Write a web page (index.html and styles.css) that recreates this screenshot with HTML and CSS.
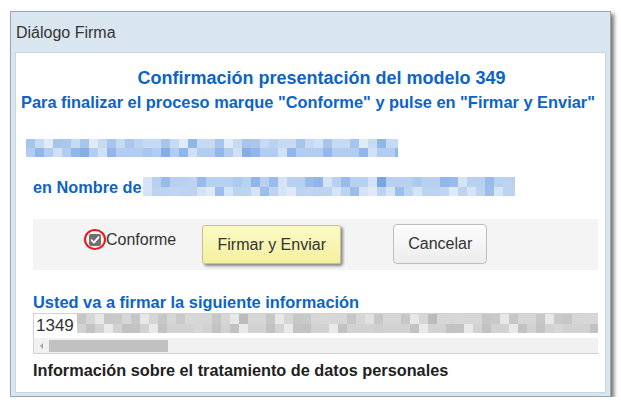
FILE: index.html
```html
<!DOCTYPE html>
<html lang="es">
<head>
<meta charset="utf-8">
<title>Diálogo Firma</title>
<link rel="stylesheet" href="styles.css">
</head>
<body>
<div class="dialog">
  <div class="dialog-title">Diálogo Firma</div>
  <div class="dialog-body">
    <div class="heading">Confirmación presentación del modelo 349</div>
    <div class="subheading">Para finalizar el proceso marque "Conforme" y pulse en "Firmar y Enviar"</div>
    <div class="blur blur-blue blur-first"><div class="b-row b-top"></div><div class="b-row b-bottom"></div></div>
    <div class="name-row">
      <span class="name-label">en Nombre de</span>
      <div class="blur blur-blue blur-name"><div class="b-row b-top alt"></div><div class="b-row b-bottom alt"></div></div>
    </div>
    <div class="action-row">
      <label class="agree">
        <span class="check-wrap">
          <span class="checkbox">
            <svg width="10" height="10" viewBox="0 0 10 10"><path d="M1.6 5.2 L4 7.6 L8.6 2.2" fill="none" stroke="#fff" stroke-width="1.8" stroke-linecap="round" stroke-linejoin="round"/></svg>
          </span>
          <span class="ring"></span>
        </span>
        <span class="agree-text">Conforme</span>
      </label>
      <button class="btn btn-sign">Firmar y Enviar</button>
      <button class="btn btn-cancel">Cancelar</button>
    </div>
    <div class="section-label">Usted va a firmar la siguiente información</div>
    <div class="info-box">
      <div class="info-line">
        <span class="info-code">1349</span>
        <div class="blur blur-gray"><div class="b-row b-top"></div><div class="b-row b-bottom"></div></div>
      </div>
      <div class="hscroll">
        <span class="arrow"></span>
        <span class="thumb"></span>
      </div>
    </div>
    <div class="privacy">Información sobre el tratamiento de datos personales</div>
  </div>
</div>
</body>
</html>
```

FILE: styles.css
```css
html, body {
  margin: 0;
  padding: 0;
  background: #ffffff;
}

body {
  font-family: "Liberation Sans", Arial, sans-serif;
  color: #333333;
}

.dialog {
  box-sizing: border-box;
  width: 601px;
  height: 386px;
  margin: 11px 0 0 10px;
  border: 1px solid #9ca6ae;
  background: #d9e6f0;
  box-shadow: 3px 3px 4px rgba(0, 0, 0, 0.55);
  display: flex;
  flex-direction: column;
}

.dialog-title {
  font-size: 16px;
  line-height: 20px;
  padding: 11px 0 9px 5px;
  color: #333333;
}

.dialog-body {
  flex: 1;
  margin: 0 4px 3px 4px;
  background: #ffffff;
  border: 1px solid #c9d6e1;
  padding: 14px 7px 0 17px;
  overflow: hidden;
}

.heading {
  font-size: 18px;
  line-height: 22px;
  font-weight: bold;
  color: #0d63c6;
  text-align: center;
  margin-left: -17px;
  margin-right: -7px;
  padding-left: 22px;
}

.subheading {
  font-size: 16.4px;
  line-height: 20px;
  font-weight: bold;
  color: #0d63c6;
  text-align: center;
  margin: 3px -7px 0 -17px;
  padding-right: 5px;
  white-space: nowrap;
}

.blur {
  display: flex;
  flex-direction: column;
}

.b-row {
  flex: 1;
}

.blur-blue .b-top {
  background:
    repeating-linear-gradient(90deg, rgba(40, 110, 210, 0.2) 0 9px, transparent 9px 27px),
    repeating-linear-gradient(90deg, transparent 0 18px, rgba(255, 255, 255, 0.45) 18px 27px, transparent 27px 45px),
    repeating-linear-gradient(90deg, transparent 0 36px, rgba(30, 100, 210, 0.16) 36px 45px, transparent 45px 63px),
    #c6daf3;
}

.blur-blue .b-bottom {
  background:
    repeating-linear-gradient(90deg, transparent 0 9px, rgba(30, 100, 210, 0.22) 9px 18px, transparent 18px 36px),
    repeating-linear-gradient(90deg, transparent 0 27px, rgba(255, 255, 255, 0.4) 27px 36px, transparent 36px 45px),
    repeating-linear-gradient(90deg, transparent 0 54px, rgba(20, 90, 200, 0.28) 54px 63px, transparent 63px 81px),
    #b2cdef;
}

.blur-blue .b-top.alt {
  background:
    repeating-linear-gradient(90deg, transparent 0 18px, rgba(40, 110, 210, 0.22) 18px 27px, transparent 27px 36px),
    repeating-linear-gradient(90deg, rgba(255, 255, 255, 0.4) 0 9px, transparent 9px 45px),
    repeating-linear-gradient(90deg, transparent 0 45px, rgba(30, 100, 210, 0.25) 45px 54px, transparent 54px 63px),
    #b8d1f0;
}

.blur-blue .b-bottom.alt {
  background:
    repeating-linear-gradient(90deg, rgba(255, 255, 255, 0.35) 0 9px, transparent 9px 27px),
    repeating-linear-gradient(90deg, transparent 0 27px, rgba(30, 100, 210, 0.2) 27px 36px, transparent 36px 45px),
    repeating-linear-gradient(90deg, transparent 0 63px, rgba(255, 255, 255, 0.5) 63px 72px, transparent 72px 81px),
    #bdd4f1;
}

.blur-first {
  width: 372px;
  height: 18px;
  margin: 27px 0 0 -7px;
}

.name-row {
  display: flex;
  align-items: center;
  height: 19px;
  margin-top: 20px;
}

.name-label {
  font-size: 16.3px;
  line-height: 20px;
  font-weight: bold;
  color: #0d63c6;
  white-space: nowrap;
}

.blur-name {
  width: 372px;
  height: 19px;
  margin-left: 1px;
}

.action-row {
  display: flex;
  align-items: center;
  height: 51px;
  margin-top: 23px;
  background: #f4f4f4;
  padding-left: 51px;
}

.agree {
  display: flex;
  align-items: center;
  margin-bottom: 10px;
  font-size: 16px;
  line-height: 20px;
  color: #333333;
}

.check-wrap {
  position: relative;
  width: 22px;
  height: 21px;
  display: flex;
  align-items: center;
  justify-content: center;
}

.checkbox {
  width: 12px;
  height: 12px;
  border-radius: 2px;
  background: #707070;
  display: flex;
  align-items: center;
  justify-content: center;
}

.ring {
  position: absolute;
  left: 0;
  top: 0;
  width: 22px;
  height: 21px;
  box-sizing: border-box;
  border: 2px solid #e21c1c;
  border-radius: 50%;
}

.agree-text {
  margin-left: 0;
}

.btn {
  font-family: "Liberation Sans", Arial, sans-serif;
  font-size: 16px;
  color: #333333;
  box-sizing: border-box;
  padding: 0;
  cursor: pointer;
}

.btn-sign {
  width: 139px;
  height: 39px;
  margin-left: 26px;
  border: 1px solid #c7c28a;
  border-radius: 3px;
  background: linear-gradient(#fbfac6, #f4f09f);
  box-shadow: 2px 2px 3px rgba(0, 0, 0, 0.45);
}

.btn-cancel {
  width: 94px;
  height: 40px;
  margin-left: 52px;
  margin-bottom: 1px;
  border: 1px solid #bdbdbd;
  border-radius: 4px;
  background: linear-gradient(#fdfdfd, #ececec);
}

.section-label {
  font-size: 16.4px;
  line-height: 20px;
  font-weight: bold;
  color: #0d63c6;
  margin-top: 22px;
}

.info-box {
  margin-top: 1px;
  border: 1px solid #d2d2d2;
  border-right: none;
  height: 41px;
  box-sizing: border-box;
  display: flex;
  flex-direction: column;
}

.info-line {
  display: flex;
  align-items: center;
  height: 24px;
}

.info-code {
  font-size: 17px;
  line-height: 20px;
  color: #333333;
  padding-left: 2px;
}

.blur-gray {
  flex: 1;
  height: 19px;
  margin-left: 3px;
  align-self: flex-start;
}

.blur-gray .b-top {
  background:
    repeating-linear-gradient(90deg, rgba(0, 0, 0, 0.07) 0 9px, transparent 9px 27px),
    repeating-linear-gradient(90deg, transparent 0 18px, rgba(255, 255, 255, 0.45) 18px 27px, transparent 27px 45px),
    repeating-linear-gradient(90deg, transparent 0 36px, rgba(0, 0, 0, 0.06) 36px 45px, transparent 45px 63px),
    #d6d6d6;
}

.blur-gray .b-bottom {
  background:
    repeating-linear-gradient(90deg, transparent 0 9px, rgba(0, 0, 0, 0.08) 9px 18px, transparent 18px 36px),
    repeating-linear-gradient(90deg, transparent 0 27px, rgba(255, 255, 255, 0.5) 27px 36px, transparent 36px 45px),
    repeating-linear-gradient(90deg, transparent 0 54px, rgba(0, 0, 0, 0.07) 54px 63px, transparent 63px 81px),
    #d2d2d2;
}

.hscroll {
  flex: 1;
  background: #f1f1f1;
  display: flex;
  align-items: center;
  padding-left: 6px;
}

.arrow {
  width: 0;
  height: 0;
  border-top: 3px solid transparent;
  border-bottom: 3px solid transparent;
  border-right: 3px solid #a3a3a3;
}

.thumb {
  width: 119px;
  height: 12px;
  margin-left: 6px;
  background: #c1c1c1;
}

.privacy {
  font-size: 16.3px;
  line-height: 20px;
  font-weight: bold;
  color: #222222;
  margin-top: 6px;
}
```
